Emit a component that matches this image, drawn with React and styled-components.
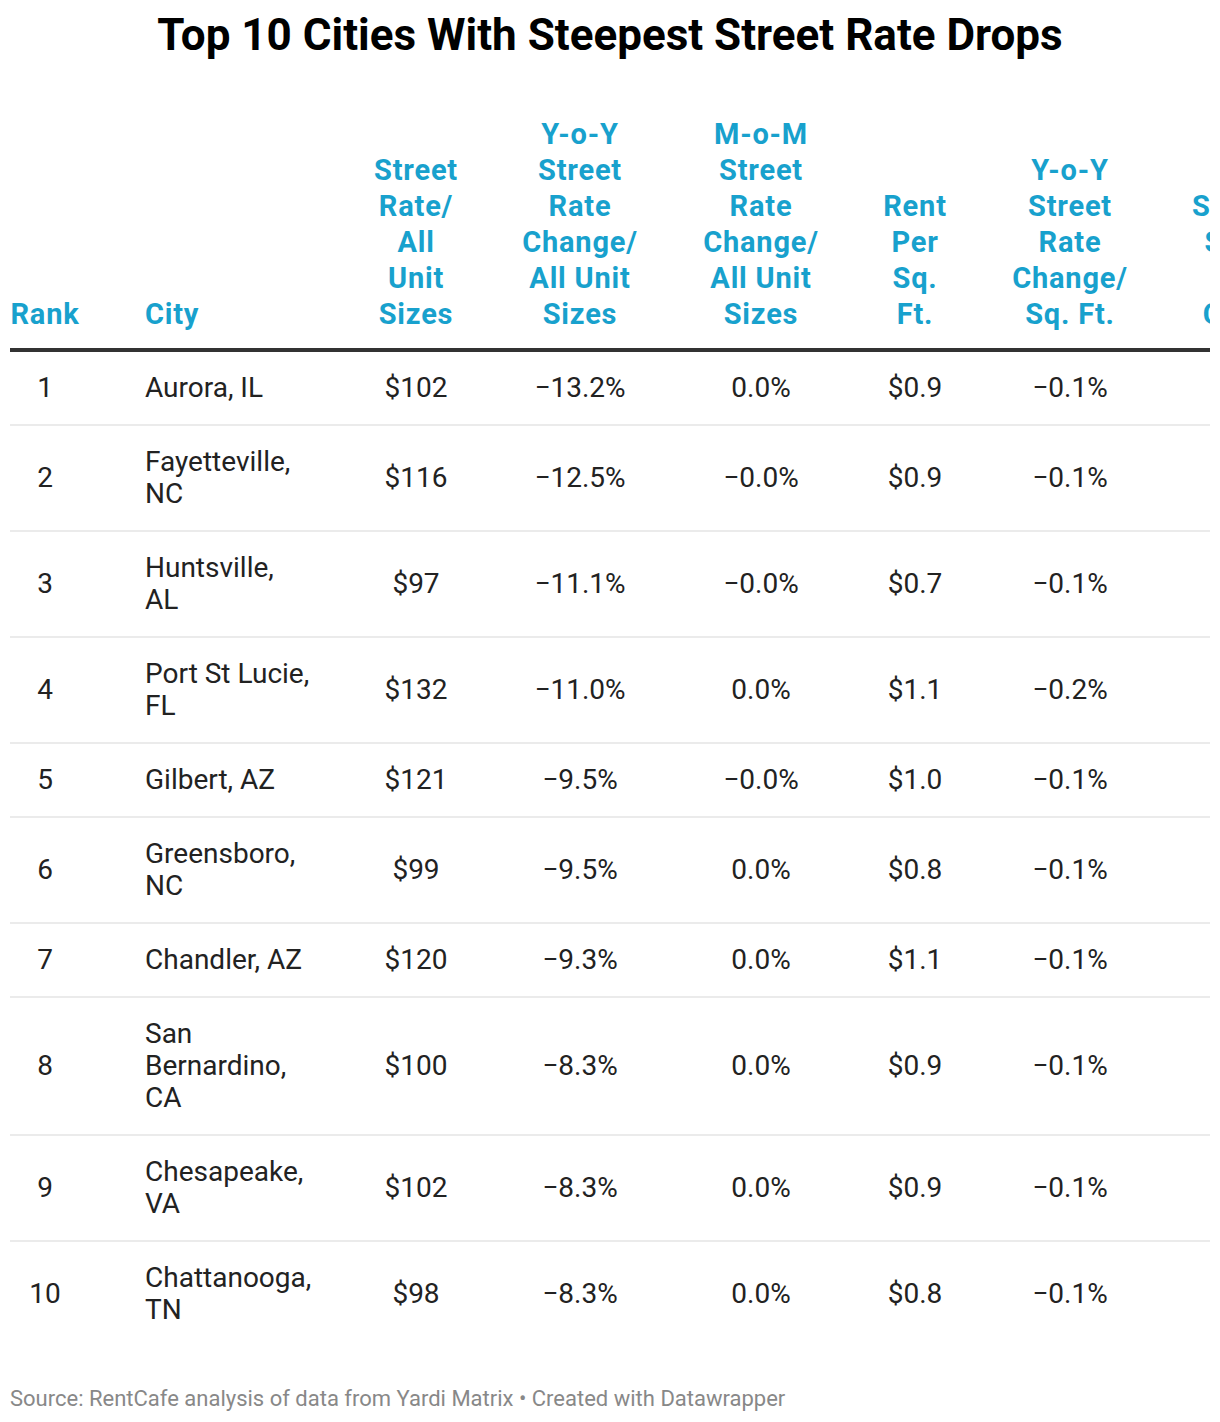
import React from "react";
import styled, { createGlobalStyle } from "styled-components";

const GlobalStyle = createGlobalStyle`
  body {
    margin: 0;
    background: #fff;
    font-family: Roboto, "Liberation Sans", sans-serif;
  }
`;

const Page = styled.div`
  width: 1200px;
  padding: 0 10px;
`;

const Title = styled.h1`
  margin: 9px 0 0;
  font-family: Roboto, "Liberation Sans", sans-serif;
  font-size: 44px;
  line-height: 52px;
  font-weight: 700;
  color: #000;
  text-align: center;
`;

const TableWrap = styled.div`
  margin-top: 55px;
  width: 1200px;
  overflow: hidden;
`;

const Table = styled.table`
  width: 1304px;
  table-layout: fixed;
  border-collapse: collapse;
`;

const Th = styled.th`
  box-sizing: border-box;
  width: ${(p) => p.w}px;
  padding: 0 ${(p) => p.pr ?? p.px ?? 0}px 16px ${(p) => p.pl ?? p.px ?? 0}px;
  vertical-align: bottom;
  text-align: ${(p) => p.align || "center"};
  font-size: 29px;
  letter-spacing: 0.8px;
  line-height: 36px;
  font-weight: 700;
  color: #18a1cd;
  border-bottom: 4px solid #333;
`;

const Row = styled.tr`
  border-bottom: 2px solid #ebebeb;
  &:last-child {
    border-bottom: none;
  }
`;

const Td = styled.td`
  box-sizing: border-box;
  padding: 20px ${(p) => p.pr ?? p.px ?? 0}px 20px ${(p) => p.pl ?? p.px ?? 0}px;
  vertical-align: middle;
  text-align: ${(p) => p.align || "center"};
  font-size: 28px;
  line-height: 32px;
  color: #222;
`;

const Footer = styled.div`
  margin-top: 41px;
  font-size: 22px;
  line-height: 24px;
  color: #888;
`;

const columns = [
  { key: "rank", label: "Rank", w: 70 },
  { key: "city", label: "City", w: 270, align: "left", pl: 65, pr: 38 },
  { key: "rate", label: "Street Rate/ All Unit Sizes", w: 132, px: 21 },
  { key: "yoy", label: "Y-o-Y Street Rate Change/ All Unit Sizes", w: 196, px: 33 },
  { key: "mom", label: "M-o-M Street Rate Change/ All Unit Sizes", w: 166, px: 18 },
  { key: "sqft", label: "Rent Per Sq. Ft.", w: 142, px: 33 },
  { key: "yoysq", label: "Y-o-Y Street Rate Change/ Sq. Ft.", w: 168, px: 19 },
  { key: "size", label: "Street Size per Cap.", w: 160, px: 30 },
];

const rows = [
  ["1", "Aurora, IL", "$102", "−13.2%", "0.0%", "$0.9", "−0.1%", "7.1"],
  ["2", "Fayetteville, NC", "$116", "−12.5%", "−0.0%", "$0.9", "−0.1%", "9.4"],
  ["3", "Huntsville, AL", "$97", "−11.1%", "−0.0%", "$0.7", "−0.1%", "8.8"],
  ["4", "Port St Lucie, FL", "$132", "−11.0%", "0.0%", "$1.1", "−0.2%", "6.5"],
  ["5", "Gilbert, AZ", "$121", "−9.5%", "−0.0%", "$1.0", "−0.1%", "5.2"],
  ["6", "Greensboro, NC", "$99", "−9.5%", "0.0%", "$0.8", "−0.1%", "8.1"],
  ["7", "Chandler, AZ", "$120", "−9.3%", "0.0%", "$1.1", "−0.1%", "5.9"],
  ["8", "San Bernardino, CA", "$100", "−8.3%", "0.0%", "$0.9", "−0.1%", "7.7"],
  ["9", "Chesapeake, VA", "$102", "−8.3%", "0.0%", "$0.9", "−0.1%", "6.3"],
  ["10", "Chattanooga, TN", "$98", "−8.3%", "0.0%", "$0.8", "−0.1%", "8.4"],
];

const App = () => (
  <Page>
    <GlobalStyle />
    <Title>Top 10 Cities With Steepest Street Rate Drops</Title>
    <TableWrap>
      <Table>
        <thead>
          <tr>
            {columns.map((c) => (
              <Th key={c.key} w={c.w} align={c.align} pl={c.pl} pr={c.pr} px={c.px}>
                {c.label}
              </Th>
            ))}
          </tr>
        </thead>
        <tbody>
          {rows.map((r) => (
            <Row key={r[0]}>
              {r.map((v, i) => (
                <Td key={i} align={columns[i].align} pl={columns[i].pl} pr={columns[i].pr} px={columns[i].px}>
                  {v}
                </Td>
              ))}
            </Row>
          ))}
        </tbody>
      </Table>
    </TableWrap>
    <Footer>Source: RentCafe analysis of data from Yardi Matrix • Created with Datawrapper</Footer>
  </Page>
);

export default App;
